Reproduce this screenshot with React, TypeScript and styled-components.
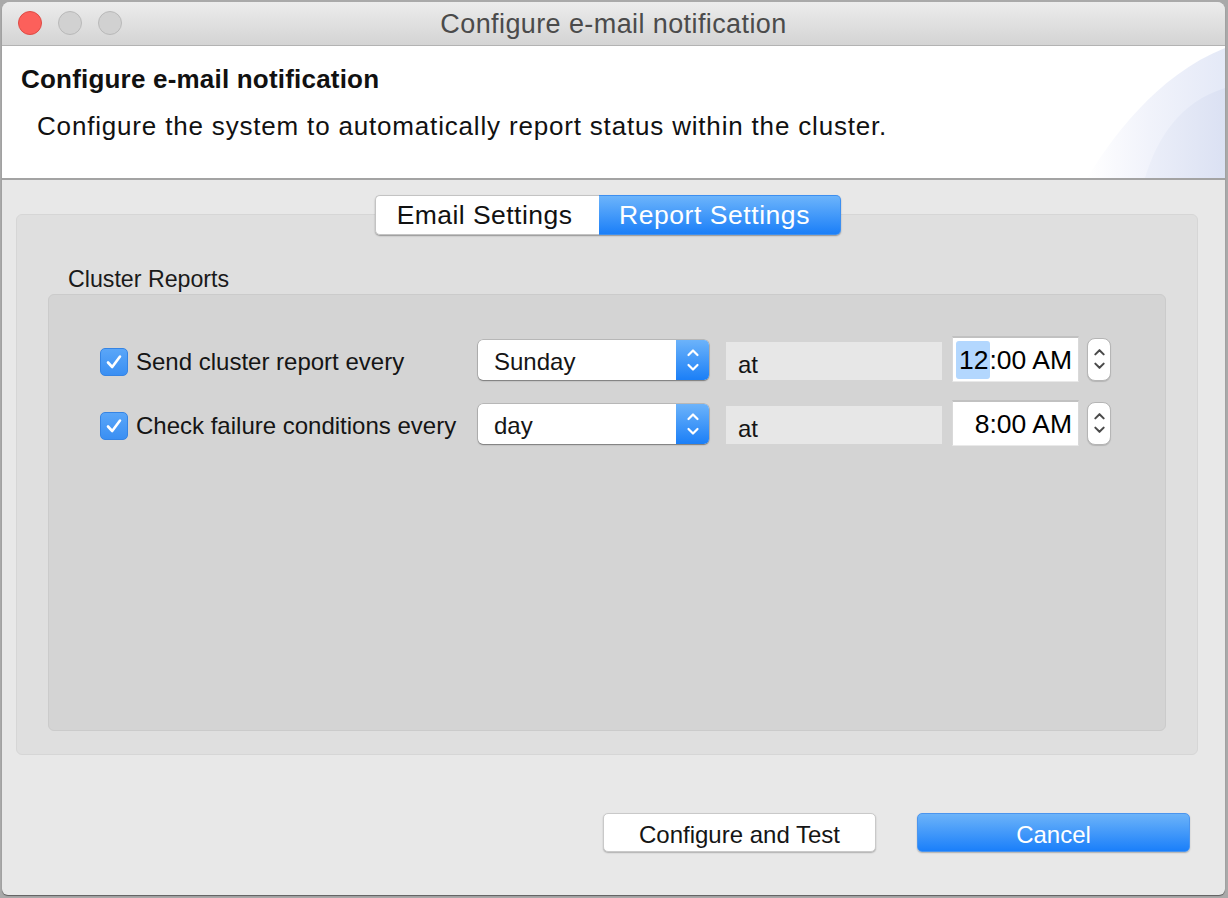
import React from "react";
import styled, { createGlobalStyle } from "styled-components";

const Global = createGlobalStyle`
  html, body { margin: 0; padding: 0; }
  body {
    background: #a9a9a9;
    width: 1228px;
    height: 898px;
    overflow: hidden;
    font-family: "Liberation Sans", Arial, sans-serif;
  }
`;

const Window = styled.div`
  margin: 2px 0 0 2px;
  width: 1223px;
  height: 893px;
  background: #e8e8e8;
  border-radius: 8px 8px 6px 6px;
  overflow: hidden;
  display: flex;
  flex-direction: column;
  box-shadow: 0 1px 1px rgba(0,0,0,0.45);
`;

const TitleBar = styled.div`
  position: relative;
  height: 43px;
  flex: none;
  background: linear-gradient(#ececec, #d4d4d4);
  border-bottom: 1px solid #b3b3b3;
  display: flex;
  align-items: center;
  justify-content: center;
`;

const Lights = styled.div`
  position: absolute;
  left: 16px;
  top: 9px;
  display: flex;
  gap: 16px;
`;

const Light = styled.span<{ $red?: boolean }>`
  width: 24px;
  height: 24px;
  border-radius: 50%;
  box-sizing: border-box;
  background: ${(p) => (p.$red ? "#fc605b" : "#d1d1d1")};
  border: 1px solid ${(p) => (p.$red ? "#de4b45" : "#b9b9b9")};
`;

const TitleText = styled.div`
  font-size: 27px;
  letter-spacing: 0.4px;
  color: #4b4b4b;
  margin-top: 2px;
`;

const Header = styled.div`
  position: relative;
  height: 132px;
  flex: none;
  background: #fff;
  border-bottom: 2px solid #a3a3a3;
  overflow: hidden;
`;

const HeaderDeco = styled.svg`
  position: absolute;
  right: 0;
  top: 0;
  width: 160px;
  height: 132px;
`;

const HeaderTitle = styled.div`
  position: relative;
  font-size: 26px;
  letter-spacing: 0.2px;
  font-weight: bold;
  color: #111;
  padding: 19px 0 0 19px;
  line-height: 28px;
`;

const HeaderSub = styled.div`
  position: relative;
  font-size: 26px;
  letter-spacing: 0.82px;
  color: #111;
  padding: 18px 0 0 35px;
  line-height: 30px;
`;

const Body = styled.div`
  padding: 15px 27px 0 14px;
  display: flex;
  flex-direction: column;
`;

const TabBar = styled.div`
  position: relative;
  z-index: 1;
  align-self: center;
  display: flex;
  height: 40px;
  margin-left: 2px;
  border-radius: 5px;
  box-shadow: 0 1px 1.5px rgba(0,0,0,0.35);
`;

const Tab = styled.div<{ $active?: boolean }>`
  box-sizing: border-box;
  height: 40px;
  display: flex;
  align-items: center;
  justify-content: center;
  font-size: 26.5px;
  letter-spacing: ${(p) => (p.$active ? "0.55px" : "0.45px")};
  padding-right: ${(p) => (p.$active ? "10px" : "6px")};
  width: ${(p) => (p.$active ? "242px" : "224px")};
  color: ${(p) => (p.$active ? "#fff" : "#111")};
  background: ${(p) =>
    p.$active ? "linear-gradient(#6cb4fb, #1b7ff8)" : "#ffffff"};
  border: 1px solid ${(p) => (p.$active ? "#3d8ff0" : "#c3c3c3")};
  border-radius: ${(p) => (p.$active ? "0 5px 5px 0" : "5px 0 0 5px")};
  ${(p) => (p.$active ? "border-left: none;" : "border-right: none;")}
`;

const Panel = styled.div`
  box-sizing: border-box;
  height: 541px;
  margin-top: -21px;
  background: #dfdfdf;
  border: 1px solid #d6d6d6;
  border-radius: 6px;
  padding: 50px 31px 23px 31px;
  display: flex;
  flex-direction: column;
`;

const GroupLabel = styled.div`
  font-size: 23.2px;
  line-height: 28px;
  color: #1a1a1a;
  padding-left: 20px;
  margin-bottom: 1px;
`;

const Group = styled.div`
  flex: 1;
  box-sizing: border-box;
  background: #d4d4d4;
  border: 1px solid #cbcbcb;
  border-radius: 6px;
  padding: 41px 0 0 51px;
  display: flex;
  flex-direction: column;
  gap: 18px;
`;

const Row = styled.div`
  height: 46px;
  display: flex;
  align-items: center;
`;

const LabelCell = styled.div`
  width: 378px;
  display: flex;
  align-items: center;
  gap: 8px;
  font-size: 24px;
  color: #151515;
  padding-top: 5px;
`;

const Check = styled.span`
  width: 28px;
  height: 28px;
  box-sizing: border-box;
  border-radius: 5px;
  background: linear-gradient(#5aa6f8, #3a8ff3);
  border: 1px solid #3584e4;
  display: flex;
  align-items: center;
  justify-content: center;
`;

const Select = styled.div`
  width: 231px;
  height: 40px;
  margin-top: 2px;
  box-sizing: border-box;
  display: flex;
  background: #fff;
  border-radius: 5px;
  box-shadow: 0 0 0 0.5px rgba(0,0,0,0.25), 0 1px 1.5px rgba(0,0,0,0.35);
  overflow: hidden;
`;

const SelectText = styled.div`
  flex: 1;
  display: flex;
  align-items: center;
  padding-left: 16px;
  font-size: 24px;
  color: #151515;
  padding-top: 3px;
`;

const SelectArrows = styled.div`
  width: 33px;
  background: linear-gradient(#6cb3fa, #1b7ff7);
  display: flex;
  align-items: center;
  justify-content: center;
`;

const AtField = styled.div`
  width: 216px;
  height: 38px;
  margin: 4px 0 0 17px;
  background: #e7e7e7;
  box-sizing: border-box;
  padding: 8px 0 0 12px;
  font-size: 24px;
  color: #151515;
  display: flex;
  align-items: center;
`;

const TimeField = styled.div`
  width: 127px;
  height: 46px;
  margin-left: 10px;
  box-sizing: border-box;
  background: #fff;
  border-top: 2px solid #c1c1c1;
  border-left: 1px solid #d9d9d9;
  border-right: 1px solid #d9d9d9;
  border-bottom: 1px solid #e9e9e9;
  display: flex;
  align-items: center;
  justify-content: flex-end;
  padding-right: 6px;
  padding-top: 1px;
  font-size: 26.5px;
  color: #000;
`;

const Highlight = styled.span`
  background: #b3d7fe;
  border-radius: 3px;
  padding: 4px 1px 3px 3px;
  margin-left: -3px;
`;

const Stepper = styled.div`
  width: 24px;
  height: 43px;
  margin-left: 8px;
  box-sizing: border-box;
  background: #fff;
  border: 1px solid #b5b5b5;
  border-radius: 8px;
  box-shadow: 0 1px 1px rgba(0,0,0,0.15);
  display: flex;
  align-items: center;
  justify-content: center;
`;

const Footer = styled.div`
  display: flex;
  justify-content: flex-end;
  gap: 41px;
  padding: 58px 35px 0 0;
`;

const Button = styled.div<{ $primary?: boolean }>`
  width: 273px;
  height: 39px;
  box-sizing: border-box;
  border-radius: 5px;
  display: flex;
  align-items: center;
  justify-content: center;
  font-size: 24px;
  padding-top: 4px;
  color: ${(p) => (p.$primary ? "#fff" : "#151515")};
  background: ${(p) =>
    p.$primary ? "linear-gradient(#6cb3f9, #1a7ffa)" : "#fff"};
  border: 1px solid ${(p) => (p.$primary ? "#4b95ee" : "#c9c9c9")};
  box-shadow: 0 1px 1.5px rgba(0,0,0,0.25);
`;

const CheckMark = () => (
  <svg width="18" height="16" viewBox="0 0 18 16">
    <path d="M3 8.5 L7.2 13 L15 2.5" fill="none" stroke="#fff" strokeWidth="2.6" strokeLinecap="round" strokeLinejoin="round" />
  </svg>
);

const UpDown = ({ color, w = 14 }: { color: string; w?: number }) => (
  <svg width={w} height="30" viewBox="0 0 14 30">
    <path d="M2.5 10 L7 5.5 L11.5 10" fill="none" stroke={color} strokeWidth="2.2" strokeLinecap="round" strokeLinejoin="round" />
    <path d="M2.5 20 L7 24.5 L11.5 20" fill="none" stroke={color} strokeWidth="2.2" strokeLinecap="round" strokeLinejoin="round" />
  </svg>
);

const rows = [
  { label: "Send cluster report every", value: "Sunday", time: "12:00 AM", sel: true },
  { label: "Check failure conditions every", value: "day", time: "8:00 AM", sel: false },
];

export default function App() {
  return (
    <>
      <Global />
      <Window>
        <TitleBar>
          <Lights>
            <Light $red />
            <Light />
            <Light />
          </Lights>
          <TitleText>Configure e-mail notification</TitleText>
        </TitleBar>
        <Header>
          <HeaderDeco viewBox="0 0 160 132" preserveAspectRatio="none">
            <defs>
              <linearGradient id="g1" x1="0" y1="0" x2="1" y2="0">
                <stop offset="0" stopColor="#ffffff" />
                <stop offset="0.45" stopColor="#f1f3fb" />
                <stop offset="1" stopColor="#e4e9f7" />
              </linearGradient>
              <linearGradient id="g2" x1="0" y1="0" x2="1" y2="0">
                <stop offset="0" stopColor="#eceff9" />
                <stop offset="1" stopColor="#dbe1f3" />
              </linearGradient>
            </defs>
            <path d="M22 132 C 45 95, 90 30, 160 2 L160 132 Z" fill="url(#g1)" />
            <path d="M80 132 C 92 92, 115 56, 160 42 L160 132 Z" fill="url(#g2)" />
          </HeaderDeco>
          <HeaderTitle>Configure e-mail notification</HeaderTitle>
          <HeaderSub>Configure the system to automatically report status within the cluster.</HeaderSub>
        </Header>
        <Body>
          <TabBar>
            <Tab>Email Settings</Tab>
            <Tab $active>Report Settings</Tab>
          </TabBar>
          <Panel>
            <GroupLabel>Cluster Reports</GroupLabel>
            <Group>
              {rows.map((r) => (
                <Row key={r.label}>
                  <LabelCell>
                    <Check>
                      <CheckMark />
                    </Check>
                    <span>{r.label}</span>
                  </LabelCell>
                  <Select>
                    <SelectText>{r.value}</SelectText>
                    <SelectArrows>
                      <UpDown color="#ffffff" />
                    </SelectArrows>
                  </Select>
                  <AtField>at</AtField>
                  <TimeField>
                    {r.sel ? (
                      <>
                        <Highlight>12</Highlight>
                        <span>:00 AM</span>
                      </>
                    ) : (
                      r.time
                    )}
                  </TimeField>
                  <Stepper>
                    <UpDown color="#4a4a4a" w={13} />
                  </Stepper>
                </Row>
              ))}
            </Group>
          </Panel>
        </Body>
        <Footer>
          <Button>Configure and Test</Button>
          <Button $primary>Cancel</Button>
        </Footer>
      </Window>
    </>
  );
}
